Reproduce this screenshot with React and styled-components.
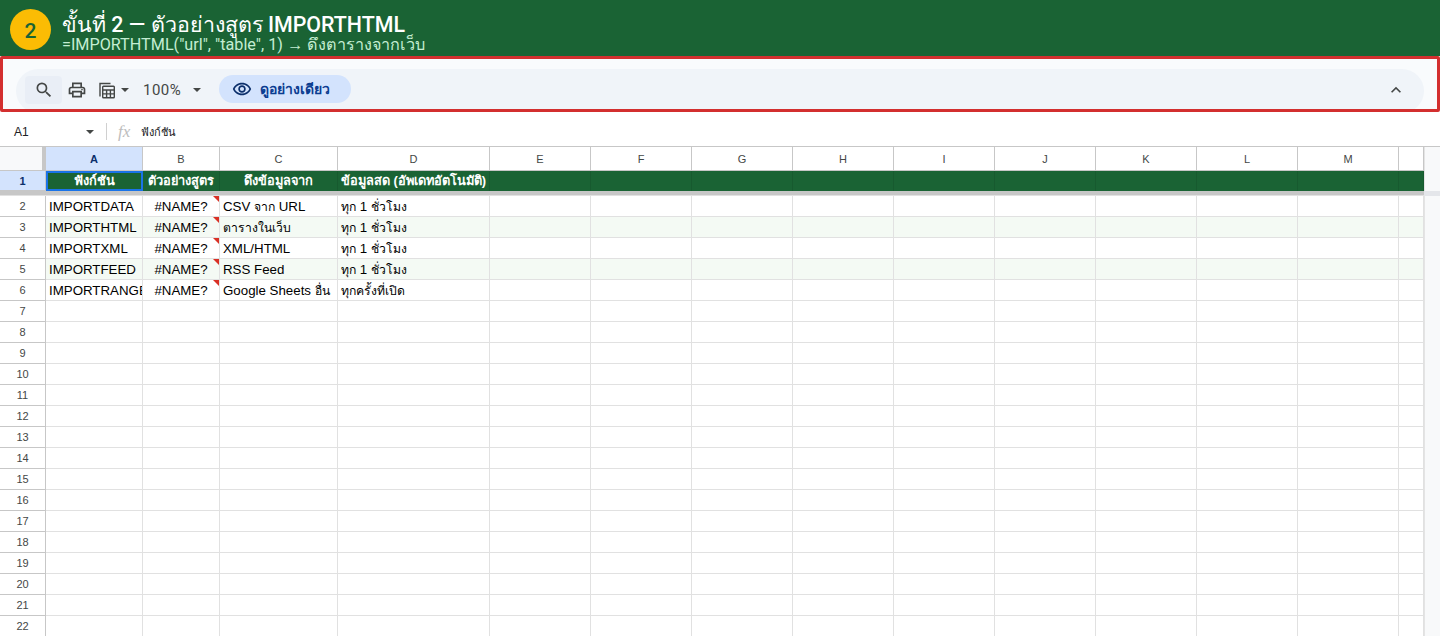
import React from 'react';
import styled, { createGlobalStyle, css } from 'styled-components';
import { MdSearch, MdOutlinePrint, MdOutlineRemoveRedEye, MdKeyboardArrowUp } from 'react-icons/md';

const UI_FONT = '"Liberation Sans", "Noto Sans", Arial, sans-serif';
const GOOGLE_FONT = 'Roboto, "Noto Sans", "Open Sans", sans-serif';
const GREEN = '#1a6334';

const columns = ['A', 'B', 'C', 'D', 'E', 'F', 'G', 'H', 'I', 'J', 'K', 'L', 'M', ''];

const rows = [
  ['IMPORTDATA', '#NAME?', 'CSV จาก URL', 'ทุก 1 ชั่วโมง'],
  ['IMPORTHTML', '#NAME?', 'ตารางในเว็บ', 'ทุก 1 ชั่วโมง'],
  ['IMPORTXML', '#NAME?', 'XML/HTML', 'ทุก 1 ชั่วโมง'],
  ['IMPORTFEED', '#NAME?', 'RSS Feed', 'ทุก 1 ชั่วโมง'],
  ['IMPORTRANGE', '#NAME?', 'Google Sheets อื่น', 'ทุกครั้งที่เปิด'],
];

const headings = ['ฟังก์ชัน', 'ตัวอย่างสูตร', 'ดึงข้อมูลจาก', 'ข้อมูลสด (อัพเดทอัตโนมัติ)'];

const Global = createGlobalStyle`
  html, body {
    margin: 0;
    padding: 0;
    height: 636px;
    overflow: hidden;
    background: #fff;
    font-family: ${UI_FONT};
  }
  * { box-sizing: border-box; }
`;

const Page = styled.div`
  width: 1440px;
  height: 636px;
  overflow: hidden;
  display: flex;
  flex-direction: column;
`;

const Banner = styled.header`
  height: 56px;
  flex: none;
  background: ${GREEN};
  display: flex;
  align-items: center;
  gap: 11px;
  padding: 0 0 0 10px;
`;

const StepBadge = styled.div`
  width: 41px;
  height: 41px;
  margin-top: 2px;
  padding-top: 3px;
  border-radius: 50%;
  background: #fbbc04;
  color: ${GREEN};
  font: 500 21px ${GOOGLE_FONT};
  display: flex;
  align-items: center;
  justify-content: center;
`;

const BannerText = styled.div`
  display: flex;
  flex-direction: column;
  margin-top: 10px;
  color: #fff;
  font-family: ${GOOGLE_FONT};
`;

const BannerTitle = styled.div`
  font-size: 21.4px;
  font-weight: 500;
  line-height: 24px;
`;

const BannerSub = styled.div`
  font-size: 16.2px;
  line-height: 16px;
  color: #c4edd2;
`;

const ToolbarFrame = styled.div`
  height: 56px;
  flex: none;
  border: 3px solid #d32f2f;
  border-radius: 2px;
  background: #f9fbfd;
  padding: 10px 13px 0;
  overflow: hidden;
`;

const ToolbarPill = styled.div`
  height: 44px;
  border-radius: 22px;
  background: #f0f4f9;
  display: flex;
  align-items: flex-start;
  padding: 7px 14px 0 9px;
  color: #444746;
`;

const IconSlot = styled.div`
  height: 28px;
  display: flex;
  align-items: center;
  justify-content: center;
  flex: none;
  width: ${p => p.$width}px;
  margin-left: ${p => p.$gap || 0}px;
  ${p => p.$active && css`
    background: #e9eef6;
    border-radius: 4px;
  `}
`;

const Caret = styled.span`
  display: inline-block;
  flex: none;
  width: 0;
  height: 0;
  border-left: 4px solid transparent;
  border-right: 4px solid transparent;
  border-top: 4px solid ${p => p.$color || '#444746'};
  margin-left: ${p => p.$gap || 0}px;
  margin-top: ${p => p.$top || 0}px;
`;

const Zoom = styled.div`
  height: 28px;
  display: flex;
  align-items: center;
  margin-left: 14px;
  font: 400 15px ${GOOGLE_FONT};
  letter-spacing: 0.5px;
  width: 58px;
  flex: none;
`;

const PreviewButton = styled.div`
  width: 132px;
  height: 28px;
  margin-left: 18px;
  margin-top: -1px;
  border-radius: 14px;
  background: #d3e3fd;
  color: #0b3d91;
  display: flex;
  align-items: center;
  gap: 8px;
  padding-left: 13px;
  font: 700 14px ${GOOGLE_FONT};
`;

const Spacer = styled.div`
  flex: 1;
`;

const FormulaBar = styled.div`
  height: 35px;
  flex: none;
  display: flex;
  align-items: center;
  padding-top: 5px;
  background: #fff;
  border-bottom: 1px solid #c7c7c7;
  color: #202124;
`;

const NameBox = styled.div`
  width: 86px;
  padding-left: 14px;
  font-size: 12px;
`;

const Divider = styled.div`
  width: 1px;
  height: 17px;
  margin: 0 11px 0 12px;
  background: #d0d0d0;
`;

const Fx = styled.span`
  font: italic 400 17px "Liberation Serif", serif;
  color: #bdbdbd;
  width: 23px;
`;

const FormulaText = styled.span`
  font-size: 11px;
`;

const Sheet = styled.div`
  flex: 1;
  min-height: 0;
  display: flex;
  flex-direction: column;
  background: #f8f9fa;
`;

const GridRow = styled.div`
  display: grid;
  grid-template-columns: 46px 97px 77px 118px 152px repeat(9, 101px) 25px 16px;
  height: ${p => p.$height}px;
  flex: none;
`;

const Corner = styled.div`
  background: #f8f9fa;
  border-right: 4px solid #c7c7c7;
  border-bottom: 1px solid #c7c7c7;
`;

const ColHead = styled.div`
  display: flex;
  align-items: center;
  justify-content: center;
  font-size: 11px;
  color: ${p => (p.$selected ? '#0b2f6b' : '#444746')};
  font-weight: ${p => (p.$selected ? 700 : 400)};
  background: ${p => (p.$selected ? '#d3e3fd' : '#fff')};
  border-right: 1px solid #c7c7c7;
  border-bottom: 1px solid #c7c7c7;
`;

const RowHead = styled.div`
  display: flex;
  align-items: center;
  justify-content: center;
  font-size: 11px;
  color: ${p => (p.$selected ? '#0b2f6b' : '#444746')};
  font-weight: ${p => (p.$selected ? 700 : 400)};
  background: ${p => (p.$selected ? '#d3e3fd' : '#fff')};
  border-right: 1px solid #c7c7c7;
  border-bottom: 1px solid #c7c7c7;
`;

const Gutter = styled.div`
  background: #f8f9fa;
  border-left: 1px solid #e4e4e4;
`;

const HeadCell = styled.div`
  background: ${GREEN};
  color: #fff;
  font-size: 12.8px;
  font-weight: 700;
  white-space: nowrap;
  overflow: hidden;
  display: flex;
  align-items: center;
  justify-content: center;
  padding-bottom: 1px;
  border-right: 1px solid #175a2f;
  ${p => p.$selected && css`
    border: 2px solid #1a73e8;
  `}
`;

const Cell = styled.div`
  position: relative;
  background: ${p => (p.$alt ? '#f4faf4' : '#fff')};
  border-right: 1px solid #e1e1e1;
  border-bottom: 1px solid #e1e1e1;
  font-size: 13.3px;
  color: #000;
  line-height: 21px;
  padding: 0 3px;
  white-space: nowrap;
  overflow: hidden;
  text-align: ${p => (p.$center ? 'center' : 'left')};
  ${p => p.$error && css`
    &::after {
      content: '';
      position: absolute;
      top: 0;
      right: 0;
      border-top: 6px solid #d93025;
      border-left: 6px solid transparent;
    }
  `}
`;

// Thai runs come out wider than the reference at the cell size
const ThaiRun = styled.span`
  font-size: 12.2px;
`;

const FreezeBar = styled.div`
  height: 5px;
  flex: none;
  display: grid;
  grid-template-columns: 1424px 16px;
`;

const FreezeLine = styled.div`
  background: #c7c7c7;
  border-bottom: 1px solid #e1e1e1;
`;

const FreezeEnd = styled.div`
  background: #e4e6ea;
`;

// the little table/calculator glyph in the toolbar
function TableIcon() {
  return (
    <svg width="20" height="20" viewBox="0 0 20 20" fill="none" stroke="#444746" strokeWidth="1.4">
      <path d="M3 16.5V3.5H13.5" />
      <rect x="5.7" y="6.2" width="11.6" height="11.6" rx="0.8" />
      <path d="M5.7 10h11.6M5.7 13.9h11.6M9.6 10v7.8M13.4 10v7.8" />
    </svg>
  );
}

function CellText({ text }) {
  if (!text) return null;
  return text.split(/([\u0E00-\u0E7F]+)/).map((part, i) =>
    i % 2 ? <ThaiRun key={i}>{part}</ThaiRun> : part
  );
}

function Toolbar() {
  return (
    <ToolbarFrame>
      <ToolbarPill>
        <IconSlot $width={37} $active>
          <MdSearch size={20} />
        </IconSlot>
        <IconSlot $width={30}>
          <MdOutlinePrint size={20} />
        </IconSlot>
        <IconSlot $width={22} $gap={4}>
          <TableIcon />
        </IconSlot>
        <Caret $gap={3} $top={12} />
        <Zoom>
          100%
          <Caret $gap={12} />
        </Zoom>
        <PreviewButton>
          <MdOutlineRemoveRedEye size={20} color="#0b2f6b" />
          ดูอย่างเดียว
        </PreviewButton>
        <Spacer />
        <IconSlot $width={28}>
          <MdKeyboardArrowUp size={20} />
        </IconSlot>
      </ToolbarPill>
    </ToolbarFrame>
  );
}

function Grid() {
  const bodyRows = Array.from({ length: 21 }, (_, i) => rows[i] || []);
  return (
    <Sheet>
      <GridRow $height={24}>
        <Corner />
        {columns.map((c, i) => (
          <ColHead key={i} $selected={c === 'A'}>{c}</ColHead>
        ))}
        <Gutter />
      </GridRow>
      <GridRow $height={20}>
        <RowHead $selected>1</RowHead>
        {columns.map((c, i) => (
          <HeadCell key={i} $selected={i === 0}>{headings[i]}</HeadCell>
        ))}
        <Gutter />
      </GridRow>
      <FreezeBar>
        <FreezeLine />
        <FreezeEnd />
      </FreezeBar>
      {bodyRows.map((row, r) => (
        <GridRow key={r} $height={21}>
          <RowHead>{r + 2}</RowHead>
          {columns.map((c, i) => (
            <Cell
              key={i}
              $alt={r < 5 && r % 2 === 1}
              $center={i === 1}
              $error={i === 1 && row[i]}
            >
              <CellText text={row[i]} />
            </Cell>
          ))}
          <Gutter />
        </GridRow>
      ))}
    </Sheet>
  );
}

export default function App() {
  return (
    <Page>
      <Global />
      <Banner>
        <StepBadge>2</StepBadge>
        <BannerText>
          <BannerTitle>ขั้นที่ 2 — ตัวอย่างสูตร IMPORTHTML</BannerTitle>
          <BannerSub>=IMPORTHTML("url", "table", 1) → ดึงตารางจากเว็บ</BannerSub>
        </BannerText>
      </Banner>
      <Toolbar />
      <FormulaBar>
        <NameBox>A1</NameBox>
        <Caret />
        <Divider />
        <Fx>fx</Fx>
        <FormulaText>ฟังก์ชัน</FormulaText>
      </FormulaBar>
      <Grid />
    </Page>
  );
}
